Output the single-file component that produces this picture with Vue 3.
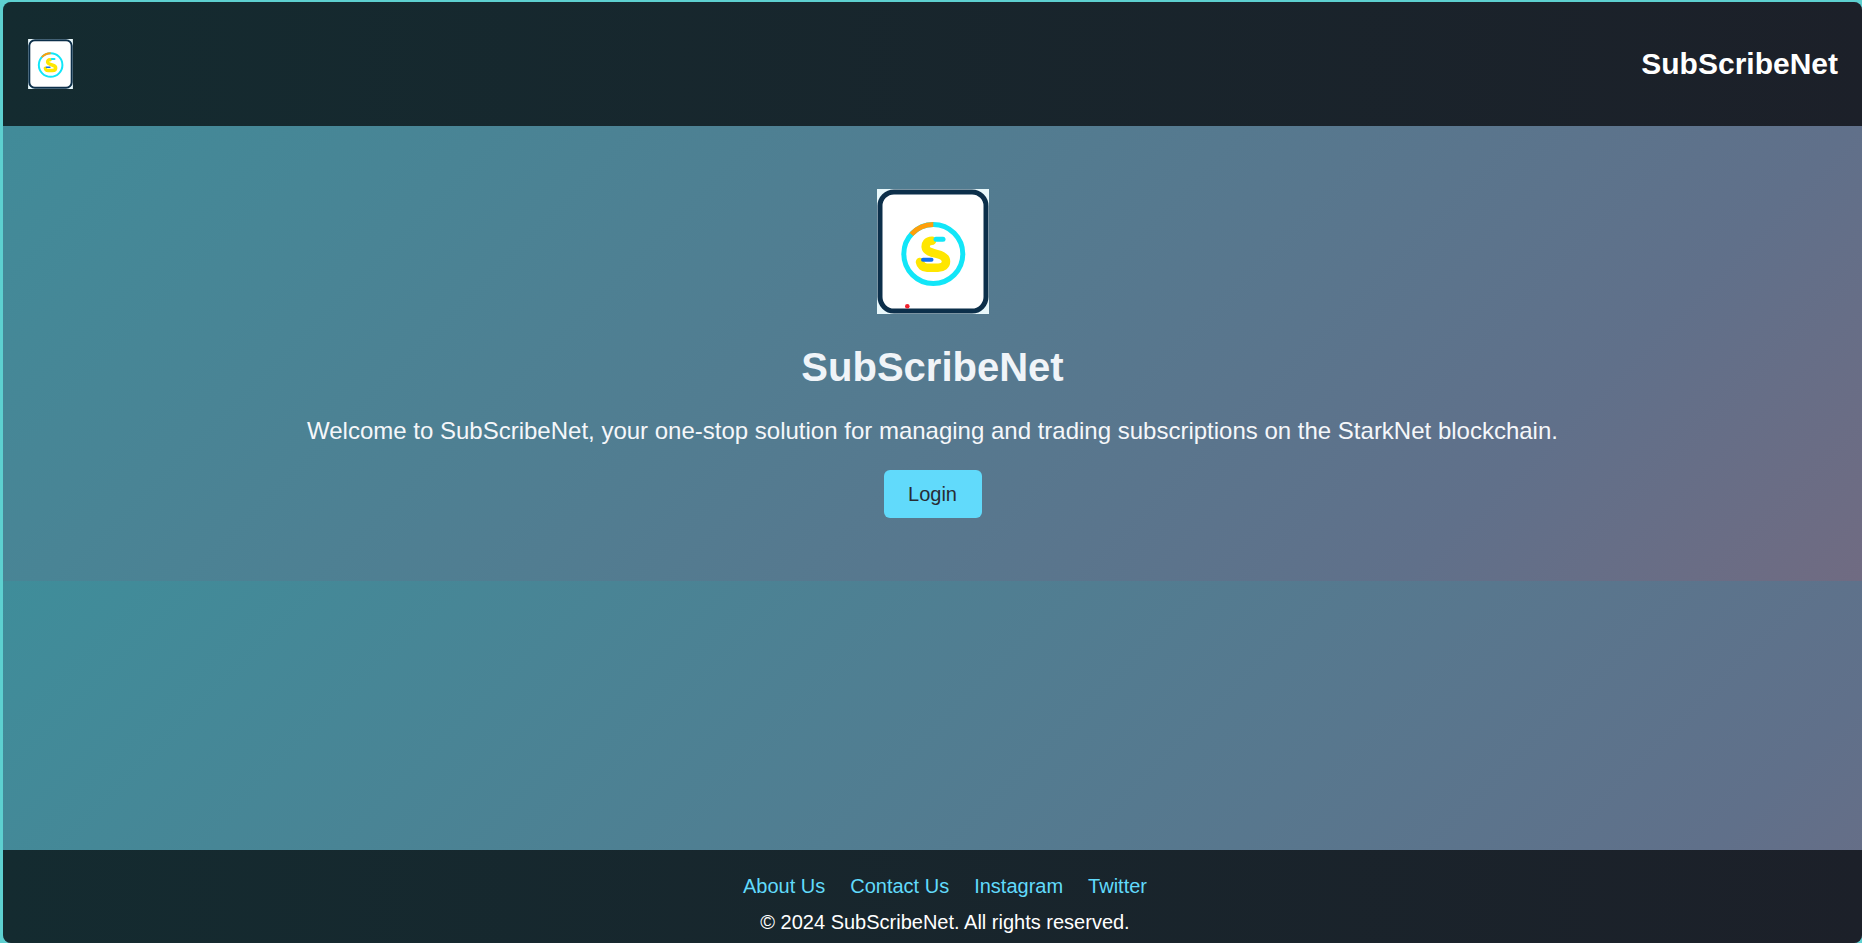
<template>
  <div class="screen">
    <svg class="defs" width="0" height="0" aria-hidden="true">
      <symbol id="logo" viewBox="0 0 112 125">
        <rect width="112" height="125" fill="#e9f8fb" />
        <rect x="3" y="3" width="106" height="119" rx="14" fill="#fff" stroke="#0c2f4a" stroke-width="5" />
        <circle cx="56.3" cy="65" r="29.5" fill="none" stroke="#12e6f8" stroke-width="5" />
        <path d="M56.3 35.5 A29.5 29.5 0 0 0 34.4 45.3" fill="none" stroke="#ff9f0a" stroke-width="5" />
        <path
          d="M55 51.8 C50 51.8 48.5 55 48.7 58 C49 62 54 63.5 60 65 C66 66.5 69 69 69 72.5 C69 76 66 78.7 61 78.7 L50 78.7 C46 78.7 43.5 76 43 73"
          fill="none"
          stroke="#ffe600"
          stroke-width="8.5"
          stroke-linecap="round"
        />
        <path d="M59 50.2 H66" stroke="#12e6f8" stroke-width="5" stroke-linecap="round" />
        <path d="M46 70.7 H54.5" stroke="#1070f0" stroke-width="4" stroke-linecap="round" />
      </symbol>
    </svg>

    <div class="frame">
      <header class="topbar">
        <svg class="logo-small"><use href="#logo" /></svg>
        <span class="brand">SubScribeNet</span>
      </header>

      <main class="content">
        <section class="hero">
          <svg class="logo-large" viewBox="0 0 112 125">
            <use href="#logo" width="112" height="125" />
            <circle cx="30.3" cy="117.3" r="2.3" fill="#f0202c" />
          </svg>
          <h1>SubScribeNet</h1>
          <p>Welcome to SubScribeNet, your one-stop solution for managing and trading subscriptions on the StarkNet blockchain.</p>
          <button class="login">Login</button>
        </section>
      </main>

      <footer class="bottombar">
        <nav class="links">
          <a v-for="link in links" :key="link" href="#">{{ link }}</a>
        </nav>
        <div class="copy">© 2024 SubScribeNet. All rights reserved.</div>
      </footer>
    </div>
  </div>
</template>

<script setup>
const links = ['About Us', 'Contact Us', 'Instagram', 'Twitter']
</script>

<style>
html, body {
  margin: 0;
  height: 100%;
  overflow: hidden;
}
</style>

<style scoped>
.screen {
  box-sizing: border-box;
  height: 943px;
  padding: 2px 0 0 3px;
  background: #5dd0d0;
  font-family: "Liberation Sans", Arial, sans-serif;
}

.defs {
  position: absolute;
}

.frame {
  height: 941px;
  display: flex;
  flex-direction: column;
  overflow: hidden;
  border-radius: 8px;
  background: linear-gradient(135deg, #3f8d9a, #60708a 81%, #706b82) 0 -2px / 100% 581px repeat;
}

.topbar {
  height: 124px;
  flex-shrink: 0;
  display: flex;
  align-items: center;
  justify-content: space-between;
  padding: 0 24px 0 25px;
  background: linear-gradient(90deg, #142b30, #1c2029);
}

.logo-small {
  width: 45px;
  height: 50px;
}

.brand {
  color: #fff;
  font-size: 30px;
  font-weight: 700;
}

.content {
  flex: 1;
}

.hero {
  display: flex;
  flex-direction: column;
  align-items: center;
  padding-top: 63px;
  text-align: center;
}

.logo-large {
  width: 112px;
  height: 125px;
}

h1 {
  margin: 30px 0 0;
  color: #f0f4f8;
  font-size: 40px;
  line-height: 46px;
}

p {
  margin: 27px 0 0;
  color: #f5f7fa;
  font-size: 24px;
  line-height: 28px;
}

.login {
  width: 98px;
  height: 48px;
  margin-top: 25px;
  border: 0;
  border-radius: 6px;
  background: #61dafb;
  color: #282c34;
  font-family: inherit;
  font-size: 20px;
}

.bottombar {
  height: 93px;
  flex-shrink: 0;
  box-sizing: border-box;
  padding: 24px 0 0 25px;
  background: linear-gradient(90deg, #142b30, #1c2029);
  text-align: center;
  font-size: 20px;
  line-height: 24px;
}

.links {
  display: flex;
  justify-content: center;
  gap: 25px;
}

.links a {
  color: #61dafb;
  text-decoration: none;
}

.copy {
  margin-top: 12px;
  color: #fff;
}
</style>
